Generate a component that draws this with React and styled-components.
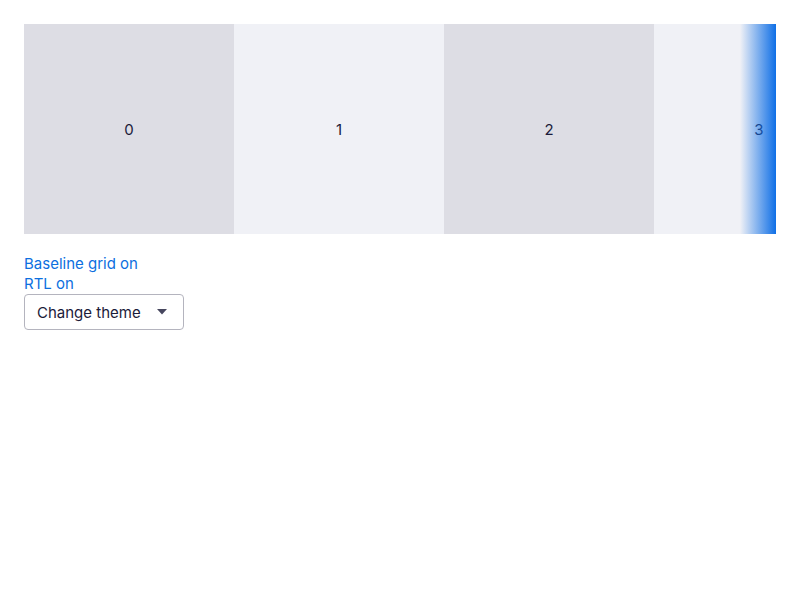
import React from "react";
import styled, { createGlobalStyle } from "styled-components";

const Global = createGlobalStyle`
    body {
        margin: 0;
        background: #ffffff;
        font-family: Inter, "Noto Sans", sans-serif;
        color: #1b1b3a;
    }
`;

const Page = styled.div`
    padding: 24px;
`;

const ScrollerWrap = styled.div`
    position: relative;
    width: 752px;
`;

const Track = styled.div`
    display: flex;
    overflow: hidden;
    height: 210px;
`;

const Item = styled.div`
    flex: 0 0 210px;
    height: 210px;
    display: flex;
    align-items: center;
    justify-content: center;
    font-size: 15px;
    background: ${(p) => (p.$dark ? "#dddde4" : "#f0f1f6")};
`;

const Fade = styled.div`
    position: absolute;
    top: 0;
    right: 0;
    width: 36px;
    height: 100%;
    background: linear-gradient(to right, rgba(15, 111, 230, 0), rgba(15, 111, 230, 1));
    pointer-events: none;
`;

const Links = styled.div`
    margin-top: 20px;
    display: flex;
    flex-direction: column;
    align-items: flex-start;
`;

const Link = styled.a`
    color: #0c6fe0;
    font-size: 15px;
    line-height: 20px;
    text-decoration: none;
    cursor: pointer;
`;

const ThemeButton = styled.button`
    width: 160px;
    height: 36px;
    display: flex;
    align-items: center;
    justify-content: space-between;
    padding: 0 16px 0 12px;
    background: #fff;
    border: 1px solid #b4b4be;
    border-radius: 4px;
    font-family: inherit;
    font-size: 15px;
    color: #1b1b3a;
`;

function Caret() {
    return (
        <svg width="10" height="6" viewBox="0 0 10 6">
            <path d="M0 0h10L5 5.5z" fill="#46465e" />
        </svg>
    );
}

export default function App() {
    const items = [0, 1, 2, 3];
    return (
        <Page>
            <Global />
            <ScrollerWrap>
                <Track>
                    {items.map((n) => (
                        <Item key={n} $dark={n % 2 === 0}>{n}</Item>
                    ))}
                </Track>
                <Fade />
            </ScrollerWrap>
            <Links>
                <Link>Baseline grid on</Link>
                <Link>RTL on</Link>
                <ThemeButton>
                    Change theme
                    <Caret />
                </ThemeButton>
            </Links>
        </Page>
    );
}
